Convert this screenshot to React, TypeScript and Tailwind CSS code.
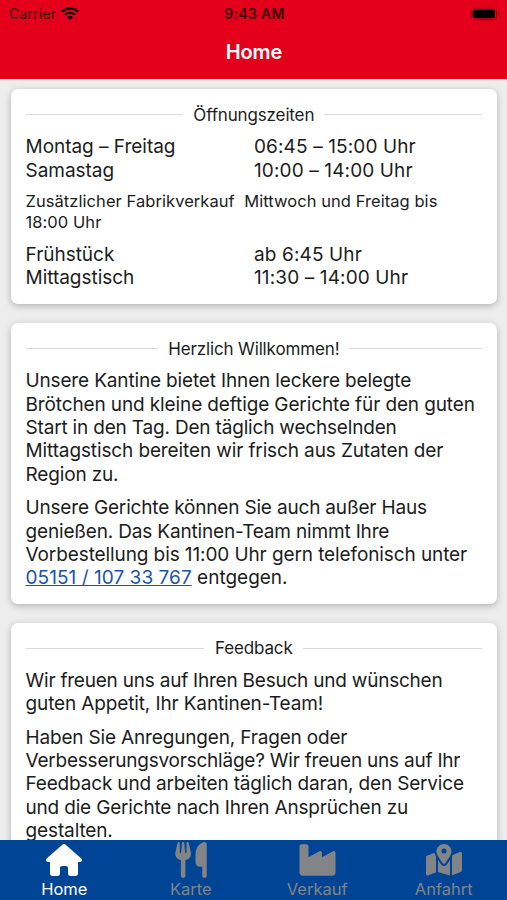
import type { ReactNode } from "react";
import type { IconType } from "react-icons";
import {
  FaHouse,
  FaIndustry,
  FaMapLocationDot,
  FaUtensils,
} from "react-icons/fa6";
import clsx from "clsx";

const tabs: { label: string; icon: IconType; size: string; active?: boolean }[] = [
  { label: "Home", icon: FaHouse, size: "h-8 w-9", active: true },
  { label: "Karte", icon: FaUtensils, size: "h-9 w-8" },
  { label: "Verkauf", icon: FaIndustry, size: "h-9 w-[41px]" },
  { label: "Anfahrt", icon: FaMapLocationDot, size: "h-8 w-9" },
];

function WifiIcon() {
  return (
    <svg viewBox="0 0 18 13" className="h-[13px] w-[18px]" fill="none">
      <path d="M1 4.6a11.6 11.6 0 0 1 16 0" stroke="currentColor" strokeWidth="2.3" />
      <path d="M4 7.8a7.2 7.2 0 0 1 10 0" stroke="currentColor" strokeWidth="2.1" />
      <path d="M9 13 6.2 10.2a4 4 0 0 1 5.6 0Z" fill="currentColor" />
    </svg>
  );
}

function BatteryIcon() {
  return (
    <svg viewBox="0 0 30 14" className="h-[14px] w-[30px]">
      <rect x="1.2" y="1.2" width="25.4" height="11.6" rx="3.4" fill="#e4001b" stroke="#9c0012" />
      <rect x="2.8" y="2.8" width="22.2" height="8.4" rx="2" fill="#000" />
      <path d="M27.8 4.8c1.8.6 1.8 3.8 0 4.4Z" fill="#9c0012" />
    </svg>
  );
}

function StatusBar() {
  return (
    <div className="grid h-[27px] grid-cols-3 items-center pr-[7px] pl-[9px] text-[14px] text-[#3a0005]">
      <div className="flex items-center gap-[5px]">
        <span className="tracking-[0.2px]">Carrier</span>
        <span className="text-black">
          <WifiIcon />
        </span>
      </div>
      <div className="text-center font-semibold tracking-[0.3px]">9:43 AM</div>
      <div className="flex justify-end">
        <BatteryIcon />
      </div>
    </div>
  );
}

function Card({ title, children }: { title: string; children: ReactNode }) {
  return (
    <section className="rounded-[7px] bg-white px-[15px] pt-[15px] pb-[13.8px] shadow-[0_2px_7px_rgba(0,0,0,0.25)]">
      <h2 className="mb-[10.2px] flex h-[21px] items-center gap-[10px] text-[17px] tracking-[-0.14px] whitespace-nowrap">
        <span className="h-px flex-1 bg-[#d9d9d9]" />
        <span className="pl-[0.6px] leading-[22px]">{title}</span>
        <span className="h-px flex-1 bg-[#d9d9d9]" />
      </h2>
      {children}
    </section>
  );
}

function Row({ label, value }: { label: string; value: string }) {
  return (
    <div className="grid grid-cols-2 whitespace-nowrap">
      <span className="tracking-[-0.03px]">{label}</span>
      <span className="pl-[0.5px] tracking-[0.12px]">{value}</span>
    </div>
  );
}

function Line({ children, className }: { children: ReactNode; className?: string }) {
  return <span className={clsx("block whitespace-nowrap", className)}>{children}</span>;
}

function TabBar() {
  return (
    <nav className="grid h-[60px] flex-none grid-cols-4 bg-[#004595] pl-[1px] text-[16.5px]">
      {tabs.map(({ label, icon: Icon, size, active }) => (
        <a
          key={label}
          className={clsx(
            "flex flex-col items-center pt-[2px]",
            active ? "text-white" : "text-[#828488]",
          )}
        >
          <span className="flex h-9 w-9 items-center justify-center">
            <Icon className={clsx("flex-none", size)} />
          </span>
          <span className="leading-[22px]">{label}</span>
        </a>
      ))}
    </nav>
  );
}

export default function App() {
  return (
    <div className="flex h-[900px] w-[507px] flex-col overflow-hidden bg-[#ededed] font-['Inter',sans-serif] text-[#1c1c1c]">
      <header className="h-[79px] flex-none bg-[#e4001b]">
        <StatusBar />
        <h1 className="pl-px text-center text-[20px] leading-[51px] font-semibold tracking-[-0.1px] text-white">
          Home
        </h1>
      </header>
      <main className="flex min-h-0 flex-1 flex-col gap-[19px] overflow-hidden px-[10.5px] pt-[10px] text-[19px] leading-[23.4px]">
        <Card title="Öffnungszeiten">
          <Row label="Montag – Freitag" value="06:45 – 15:00 Uhr" />
          <Row label="Samastag" value="10:00 – 14:00 Uhr" />
          <div className="mt-[9px] mb-[10.4px] text-[16.5px] leading-[20.7px] tracking-[0.06px]">
            <Line>Zusätzlicher Fabrikverkauf&nbsp; Mittwoch und Freitag bis</Line>
            <Line>18:00 Uhr</Line>
          </div>
          <Row label="Frühstück" value="ab 6:45 Uhr" />
          <Row label="Mittagstisch" value="11:30 – 14:00 Uhr" />
          <div className="h-[0.6px]" />
        </Card>
        <Card title="Herzlich Willkommen!">
          <p>
            <Line className="tracking-[-0.15px]">Unsere Kantine bietet Ihnen leckere belegte</Line>
            <Line className="tracking-[-0.12px]">Brötchen und kleine deftige Gerichte für den guten</Line>
            <Line className="tracking-[-0.18px]">Start in den Tag. Den täglich wechselnden</Line>
            <Line className="tracking-[-0.12px]">Mittagstisch bereiten wir frisch aus Zutaten der</Line>
            <Line className="tracking-[-0.15px]">Region zu.</Line>
          </p>
          <p className="mt-[10px]">
            <Line className="tracking-[-0.18px]">Unsere Gerichte können Sie auch außer Haus</Line>
            <Line className="tracking-[-0.17px]">genießen. Das Kantinen-Team nimmt Ihre</Line>
            <Line className="tracking-[-0.1px]">Vorbestellung bis 11:00 Uhr gern telefonisch unter</Line>
            <Line>
              <a className="tracking-[0.05px] text-[#1a55a5] underline">05151 / 107 33 767</a> entgegen.
            </Line>
          </p>
        </Card>
        <Card title="Feedback">
          <p>
            <Line className="tracking-[-0.22px]">Wir freuen uns auf Ihren Besuch und wünschen</Line>
            <Line className="tracking-[-0.13px]">guten Appetit, Ihr Kantinen-Team!</Line>
          </p>
          <p className="mt-[10px]">
            <Line className="tracking-[-0.17px]">Haben Sie Anregungen, Fragen oder</Line>
            <Line className="tracking-[-0.22px]">Verbesserungsvorschläge? Wir freuen uns auf Ihr</Line>
            <Line className="tracking-[-0.17px]">Feedback und arbeiten täglich daran, den Service</Line>
            <Line className="tracking-[-0.18px]">und die Gerichte nach Ihren Ansprüchen zu</Line>
            <Line className="tracking-[-0.12px]">gestalten.</Line>
          </p>
        </Card>
      </main>
      <TabBar />
    </div>
  );
}
